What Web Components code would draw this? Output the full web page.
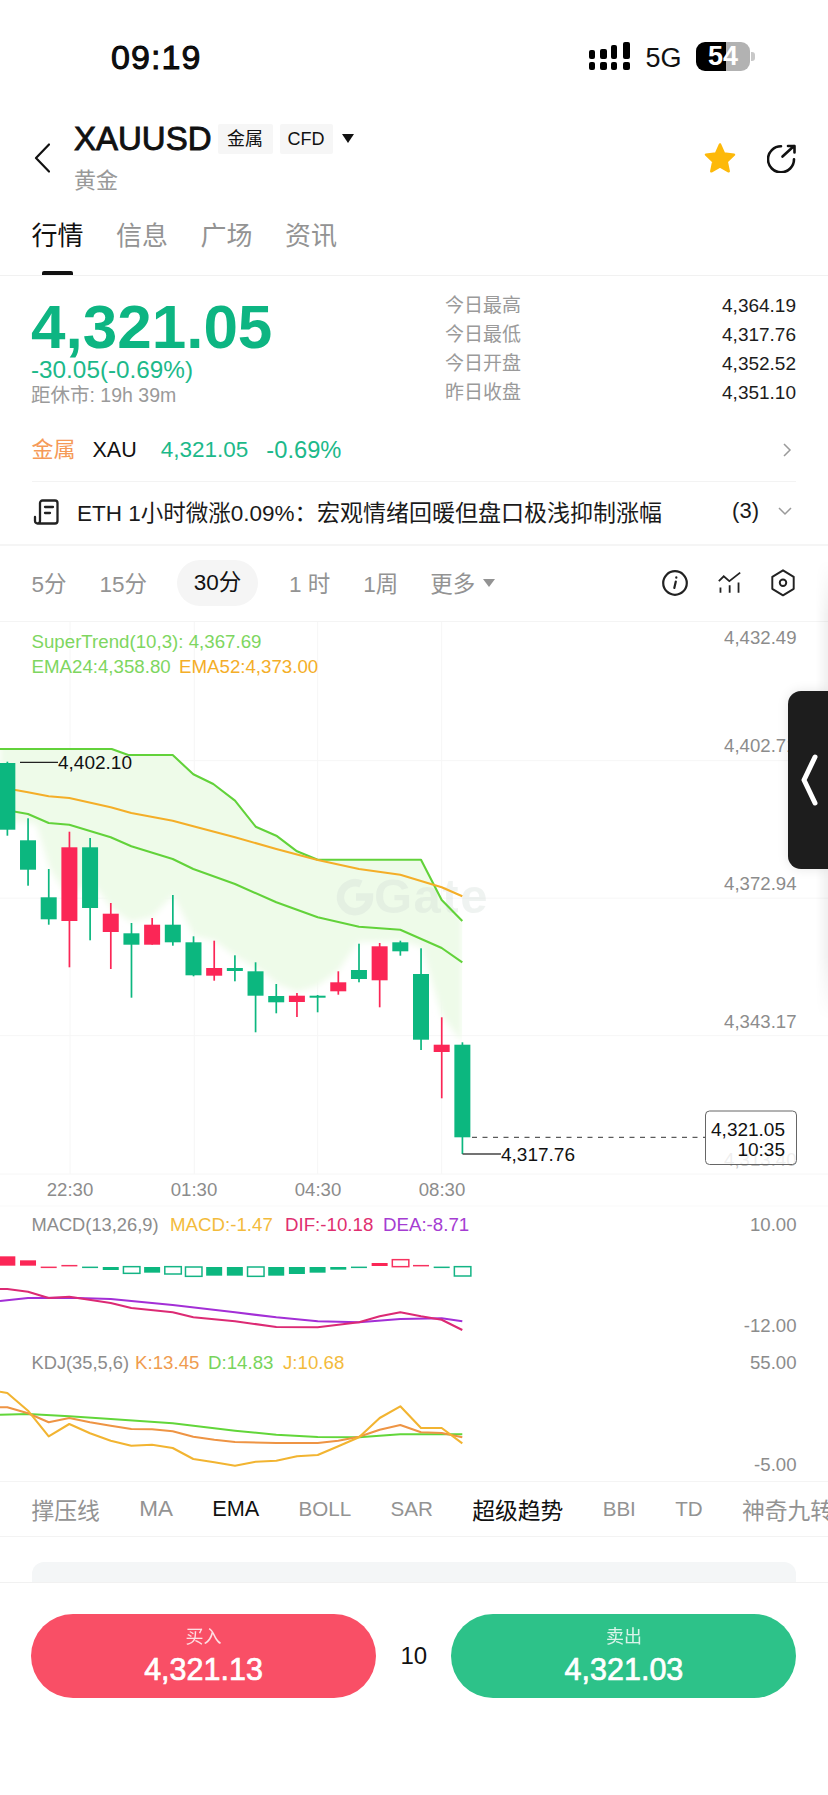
<!DOCTYPE html>
<html lang="zh"><head><meta charset="utf-8"><title>XAUUSD</title>
<style>
html,body{margin:0;padding:0;background:#fff}
body{width:828px;height:1795px;overflow:hidden;font-family:"Liberation Sans","Noto Sans CJK SC",sans-serif;color:#111;display:flex;flex-direction:column}
</style></head><body>
<status-bar></status-bar>
<market-header></market-header>
<market-tabs></market-tabs>
<price-stats></price-stats>
<metal-row></metal-row>
<news-row></news-row>
<interval-bar></interval-bar>
<kline-chart></kline-chart>
<indicator-tabs></indicator-tabs>
<card-peek></card-peek>
<trade-footer></trade-footer>
<side-handle></side-handle>
<script>
const FONT='"Liberation Sans","Noto Sans CJK SC",sans-serif';
function def(name,html){customElements.define(name,class extends HTMLElement{connectedCallback(){if(this.shadowRoot)return;this.attachShadow({mode:'open'}).innerHTML=html;}});}

def('status-bar',`<style>
:host{display:flex;flex:none;height:110px;position:relative;box-sizing:border-box;padding:38px 73px 0 111px;justify-content:space-between;align-items:flex-start}
.t{font-size:34px;line-height:38px;font-weight:400;letter-spacing:1.1px;-webkit-text-stroke:.9px #000}
.r{display:flex;align-items:center;height:38px;margin-top:-1px}
.g{font-size:27px;line-height:38px;margin:3px 14.500px 0 15px}
.b{position:relative;width:54px;height:29px;border-radius:9px;background:linear-gradient(90deg,#000 0 30px,#b2b2b2 30px);color:#fff;font-weight:700;font-size:27px;line-height:29px;text-align:center}
.n{width:4px;height:9px;background:#c8c8c8;border-radius:0 3px 3px 0;margin-left:1px}
</style><div class="t">09:19</div><div class="r">
<svg width="41" height="29" viewBox="0 0 41 29" fill="#000"><rect x="0" y="20" width="6" height="8" rx="2"/><rect x="0" y="8" width="6" height="9" rx="2"/><rect x="11" y="20" width="7" height="8" rx="2"/><rect x="11" y="7" width="7" height="10" rx="2"/><rect x="22" y="20" width="6" height="8" rx="2"/><rect x="22" y="3" width="6" height="14" rx="2"/><rect x="34" y="20" width="7" height="8" rx="2"/><rect x="34" y="0" width="7" height="17" rx="2"/></svg>
<span class="g">5G</span><div class="b">54</div><div class="n"></div></div>`);

def('market-header',`<style>
:host{display:flex;flex:none;height:100px;box-sizing:border-box;padding:14px 31px 0 34px;position:relative}
.back{margin-top:19px;width:16px;height:30px;flex:none}
.m{margin-left:24px;flex:1}
.row{display:flex;align-items:center;height:30px}
.x{font-size:33px;font-weight:400;-webkit-text-stroke:.9px #111;line-height:30px;margin-right:6px}
.tag{background:#f6f6f6;height:30px;line-height:30px;font-size:18px;padding:0 8px;margin-right:7px;border-radius:2px;box-sizing:border-box;width:55px;text-align:center}
.tag+.tag{width:53px;margin-right:9px}
.tri{width:0;height:0;border-left:6.5px solid transparent;border-right:6.5px solid transparent;border-top:9px solid #111;margin-top:-2px}
.s{color:#999;font-size:22px;line-height:22px;margin-top:16px}
.a{display:flex;align-items:center;gap:30px;height:60px;margin-top:4px}
</style>
<svg class="back" viewBox="0 0 16 30" fill="none" stroke="#111" stroke-width="2.2" stroke-linecap="round" stroke-linejoin="round"><path d="M15 1.5 2 15 15 28.5"/></svg>
<div class="m"><div class="row"><span class="x">XAUUSD</span><span class="tag">金属</span><span class="tag">CFD</span><span class="tri"></span></div><div class="s">黄金</div></div>
<div class="a">
<svg width="34" height="32" viewBox="0 0 34 32"><path d="M17 2.5 21 11.5 31 12.700 23.700 19.500 25.700 29.300 17 24.300 8.300 29.300 10.300 19.500 3 12.700 13 11.500Z" fill="#fdb90a" stroke="#fdb90a" stroke-width="2.5" stroke-linejoin="round"/></svg>
<svg width="30" height="30" viewBox="0 0 30 30" fill="none" stroke="#111" stroke-width="2.600" stroke-linecap="round" stroke-linejoin="round"><path d="M14 3.300A13 13 0 1 0 27 16.300"/><path d="M15.500 13.500 27 3M21 3h6.500v6.500"/></svg>
</div>`);

def('market-tabs',`<style>
:host{display:block;flex:none;height:66px;box-sizing:border-box;border-bottom:1px solid #f1f1f1;position:relative}
.w{display:flex;gap:32.500px;padding:9px 0 0 31.500px;font-size:26px;line-height:34px;color:#939393}
.w b{font-weight:400;color:#111}
.i{position:absolute;left:42px;bottom:0;width:31px;height:4px;background:#111;border-radius:2px 2px 0 0}
</style><div class="w"><b>行情</b><span>信息</span><span>广场</span><span>资讯</span></div><div class="i"></div>`);

def('price-stats',`<style>
:host{display:flex;flex:none;height:149px;box-sizing:border-box;padding:0 32px 0 31px;justify-content:space-between}
.p{font-size:62px;font-weight:700;color:#0db582;line-height:62px;margin-top:20px}
.c{font-size:24.300px;color:#1cb98a;line-height:26px;margin-top:-1px;white-space:nowrap}
.d{font-size:19.500px;color:#9a9a9a;line-height:24px;margin-top:0}
.st{width:351px;padding-top:14.500px}
.r{display:flex;justify-content:space-between;height:29px;line-height:29px;font-size:19px}
.r span{color:#9a9a9a}.r b{font-weight:400;color:#1c1c1c}
</style><div><div class="p">4,321.05</div><div class="c">-30.05(-0.69%)</div><div class="d">距休市: 19h 39m</div></div>
<div class="st"><div class="r"><span>今日最高</span><b>4,364.19</b></div><div class="r"><span>今日最低</span><b>4,317.76</b></div><div class="r"><span>今日开盘</span><b>4,352.52</b></div><div class="r"><span>昨日收盘</span><b>4,351.10</b></div></div>`);

def('metal-row',`<style>
:host{display:block;flex:none;height:58px;box-sizing:border-box;padding:0 32px 0 31.500px}
.w{display:flex;align-items:center;height:57px;padding-bottom:6px;box-sizing:border-box;border-bottom:1px solid #f3f3f3;font-size:22.500px;color:#1cb98a;line-height:26px}
.a{color:#f59a58;font-size:22px;margin-right:17px}.x{color:#111;font-size:21.500px;margin-right:24px}.v{margin-right:18px}.e{font-size:23.700px}
svg{margin-left:auto;margin-right:4px}
</style><div class="w"><span class="a">金属</span><span class="x">XAU</span><span class="v">4,321.05</span><span class="e">-0.69%</span><svg width="9" height="14" viewBox="0 0 9 14" fill="none" stroke="#9a9a9a" stroke-width="1.500"><path d="M1 1l6 6-6 6"/></svg></div>`);

def('news-row',`<style>
:host{display:flex;flex:none;height:63px;box-sizing:border-box;align-items:center;padding:0 36px 6px 33px;border-bottom:2px solid #f5f5f5;font-size:22.500px;color:#1a1a1a}
svg.d{margin-right:18px;flex:none;margin-top:2px}
.t{flex:1;white-space:nowrap}.t i{font-style:normal;font-size:23px}
.n{margin-right:19px;font-size:22px}
</style><svg class="d" width="26" height="26" viewBox="0 0 26 26" fill="none" stroke="#222" stroke-width="2.300" stroke-linecap="round" stroke-linejoin="round"><path d="M2 18v4a2.500 2.500 0 0 0 5 0V4a2.500 2.500 0 0 1 2.500-2.500H22A2.500 2.500 0 0 1 24.500 4v18a2.500 2.500 0 0 1-2.500 2.500H5"/><path d="M12 8h8M12 14h5"/></svg>
<span class="t">ETH 1小时微涨0.09%：<i>宏观情绪回暖但盘口极浅抑制涨幅</i></span><span class="n">(3)</span><svg width="14" height="9" viewBox="0 0 14 9" fill="none" stroke="#9a9a9a" stroke-width="1.500" style="margin-top:2px"><path d="M1 1l6 6 6-6"/></svg>`);

def('interval-bar',`<style>
:host{display:flex;flex:none;height:76px;box-sizing:border-box;align-items:center;padding:0 33px 0 31.500px;font-size:22.500px;color:#939393;border-bottom:1px solid #f4f4f4}
.i{flex:none;margin-top:-4px}.on{background:#f5f5f5;color:#111;width:81px;height:46px;line-height:46px;border-radius:23px;text-align:center;margin-top:-1px}
.tri{width:0;height:0;border-left:6px solid transparent;border-right:6px solid transparent;border-top:8px solid #939393;margin-left:8px;margin-top:-1px}
.ic{margin-left:auto;display:flex;align-items:center;gap:29px;margin-top:-2px}
</style><span class="i" style="margin-right:33px">5分</span><span class="i" style="margin-right:30px">15分</span><span class="i on" style="margin-right:31px">30分</span><span class="i" style="margin-right:33px">1 时</span><span class="i" style="margin-right:32px">1周</span><span class="i">更多</span><span class="tri"></span>
<span class="ic">
<svg width="26" height="26" viewBox="0 0 26 26" fill="none" stroke="#222" stroke-width="2.200" stroke-linecap="round"><circle cx="13" cy="13" r="11.800"/><path d="M13.800 11.500 12.300 18"/><path d="M14.300 7.300v.4"/></svg>
<svg width="25" height="23" viewBox="195 35 75 70" fill="none" stroke="#222" stroke-width="5.500"><path d="M200 66 215 51 232 66 265 40"/><path d="M205 85v16M233 78v23M260 70v31"/></svg>
<svg width="24" height="28" viewBox="358 32 74 84" fill="none" stroke="#222" stroke-width="6" stroke-linejoin="round"><path d="M395 35 428 55V92L395 112 362 92V55Z"/><circle cx="395" cy="73" r="10"/></svg>
</span>`);

class KlineChart extends HTMLElement{
 connectedCallback(){
  if(this.shadowRoot)return;
  const G='#0cb77f',R='#fb2656',LG='#62d23a',OR='#f4ae28';
  const X=i=>(22+i*62.05)/3;
  const c=[[0,764,830.7,762.7,836.7],[0,841.3,870.7,819.3,886.7],[0,898.3,920.3,870,925.7],[1,848.3,922,832.7,968.3],[0,848.3,909,839,941.3],[1,914.7,933,904,970],[0,934.3,945.7,924,998.7],[1,925.7,945.7,919,945.7],[0,925.7,943.3,896,946.7],[0,943.3,976.3,937.3,977.3],[1,969,976.7,941.7,981.7],[0,969,972,956.3,982.3],[0,972.3,996.7,963.3,1033.3],[0,997,1003.3,985,1014.3],[1,996.7,1003,994,1018],[0,996.7,998.7,996,1013.3],[1,983.3,992.3,972.3,995.7],[0,971,980,944.7,983.3],[1,947.3,981.3,944,1008.3],[0,943.3,952.3,941.7,956.7],[0,975,1040.7,949.3,1051],[1,1045.7,1053,1018.3,1099.3],[0,1045.7,1138.3,1043.3,1155]];
  const pts=(a,base)=>a.map(([x,y])=>`${(x/3).toFixed(1)},${(base+y/3).toFixed(1)}`).join(' ');
  const st=[[0,390],[335,390],[385,408],[518,408],[580,466],[640,495],[705,545],[767,623],[829,650],[891,697],[953,722],[1263,722],[1325,843],[1387,906]];
  const e52=[[0,505],[84,520],[146,532],[208,537],[332,565],[394,582],[518,605],[580,622],[705,655],[829,690],[953,723],[1077,750],[1201,767],[1325,805],[1387,832]];
  const e24=[[0,570],[84,585],[146,612],[208,617],[332,655],[394,682],[518,720],[580,750],[705,795],[829,850],[953,895],[1077,923],[1201,932],[1325,987],[1387,1030]];
  const low='462,1043 442,1017 422,948 400,942 380,943 358,943 338,972 317,987 297,993 277,985 263,973 235,957 215,942 194,937 173,896 152,918 131,923 112,910 90,880 69,900 50,870 36,825 20,823 0,823';
  const dif=[[0,270],[22,270],[84,278],[146,297],[208,293],[332,312],[394,327],[518,340],[580,355],[705,367],[829,384],[953,385],[1077,370],[1139,352],[1201,340],[1263,352],[1325,362],[1387,393]];
  const dea=[[0,306],[84,297],[208,296],[332,300],[518,318],[705,340],[829,355],[953,367],[1077,370],[1201,360],[1325,358],[1387,367]];
  const J=[[0,578],[22,582],[84,635],[146,712],[208,675],[270,703],[332,725],[394,740],[456,737],[518,747],[580,780],[643,790],[705,800],[767,788],[829,785],[891,772],[953,768],[1015,742],[1077,715],[1139,657],[1201,622],[1263,687],[1325,687],[1387,733]];
  const K=[[0,625],[22,625],[84,643],[146,670],[208,657],[270,670],[332,680],[394,690],[456,691],[518,697],[580,713],[643,722],[705,729],[829,732],[953,732],[1015,725],[1077,713],[1139,692],[1201,678],[1263,700],[1325,702],[1387,715]];
  const D=[[0,647],[84,645],[208,652],[332,660],[518,673],[705,695],[829,707],[953,714],[1077,715],[1201,706],[1387,706]];
  const macd=[['rf',172,200],['rf',184,200],['rl',205],['rl',200],['gl',205],['gf',204,213],['go',203,223],['gf',204,221],['go',203,225],['go',204,232],['gf',204,230],['gf',204,230],['go',204,232],['gf',204,230],['gf',204,225],['gf',204,221],['gf',204,212],['gl',205],['rf',192,201],['ro',182,203],['rl',200],['gl',205],['go',203,231]];
  let s='<defs><filter id="bl" x="-5%" y="-5%" width="110%" height="110%"><feGaussianBlur stdDeviation="3"/></filter><clipPath id="cp"><polygon points="'+pts(st,620)+' 462,1100 0,1100"/></clipPath></defs>';
  for(const x of [70,194.3,317.7,441.7]) s+=`<line x1="${x}" x2="${x}" y1="623" y2="1175" stroke="#f6f6f6"/>`;
  for(const y of [761.7,899.2,1036.7,1175]) s+=`<line x1="0" x2="828" y1="${y}" y2="${y}" stroke="#f6f6f6"/>`;
  s+=`<line x1="0" x2="828" y1="1207" y2="1207" stroke="#f9f9f9"/>`;
  s+=`<g clip-path="url(#cp)"><polygon points="0,640 462,640 ${low}" fill="#eefbe9" filter="url(#bl)"/></g>`;
  s+=`<g opacity=".32"><path d="M361 885A14.500 14.500 0 1 0 369.500 898H356" fill="none" stroke="#d0dbd6" stroke-width="7.500"/><text x="374" y="914" font-size="49" font-weight="700" letter-spacing="1.500" fill="#d0dbd6">Gate</text></g>`;
  const pl=(a,col,b=620,w=2.1)=>`<polyline points="${pts(a,b)}" fill="none" stroke="${col}" stroke-width="${w}" stroke-linejoin="round"/>`;
  s+=pl(st,LG)+pl(e24,LG)+pl(e52,OR);
  c.forEach((d,i)=>{const x=X(i),col=d[0]?R:G;s+=`<rect x="${x-.8}" y="${d[3]}" width="1.700" height="${d[4]-d[3]}" fill="${col}"/><rect x="${x-8}" y="${d[1]}" width="16" height="${d[2]-d[1]}" fill="${col}"/>`;});
  s+=`<line x1="20" x2="58" y1="763.3" y2="763.3" stroke="#222" stroke-width="1.200"/><line x1="462.500" x2="501" y1="1155" y2="1155" stroke="#444" stroke-width="1.500"/>`;
  s+=`<line x1="472" x2="705" y1="1138.300" y2="1138.300" stroke="#333" stroke-dasharray="5 5.500" stroke-width="1"/>`;
  const T=(x,y,t,col='#8c8c8c',a='start',fs=18.7)=>`<text x="${x}" y="${y}" fill="${col}" text-anchor="${a}" font-size="${fs}">${t}</text>`;
  s+=T(58,770,'4,402.10','#111','start',19)+T(501,1162,'4,317.76','#111','start',19);
  for(const [y,t] of [[645,'4,432.49'],[753,'4,402.71'],[891,'4,372.94'],[1029,'4,343.17']]) s+=T(796.5,y,t,'#8c8c8c','end',18.6);
  s+=`<text x="796.500" y="1167" fill="#c4c4c4" text-anchor="end" font-size="18.600">4,313.40</text>`;
  s+=`<rect x="705.500" y="1112" width="91" height="53.500" rx="4" fill="#fff" fill-opacity=".72" stroke="#666" stroke-width="1"/>`;
  s+=T(785,1137,'4,321.05','#111','end',19)+T(785,1157,'10:35','#111','end',19);
  for(const [x,t] of [[70,'22:30'],[194,'01:30'],[318,'04:30'],[442,'08:30']]) s+=T(x,1197,t,'#8c8c8c','middle',18.6);
  s+=T(31.5,649,'SuperTrend(10,3): 4,367.69','#7ed65f')+T(31.5,673.5,'EMA24:4,358.80','#7ed65f')+T(179,673.5,'EMA52:4,373.00',OR);
  s+=T(31.5,1232,'MACD(13,26,9)','#8c8c8c','start',18.3)+T(170,1232,'MACD:-1.47','#f3bb3c')+T(285,1232,'DIF:-10.18','#df2f70')+T(383,1232,'DEA:-8.71','#a53dd2');
  s+=T(31.5,1370,'KDJ(35,5,6)','#8c8c8c','start',18.3)+T(135,1370,'K:13.45','#ef9c50')+T(208,1370,'D:14.83','#78d45c')+T(283,1370,'J:10.68','#f3bb3c');
  for(const [y,t] of [[1232,'10.00'],[1333,'-12.00'],[1370,'55.00'],[1472,'-5.00']]) s+=T(796.5,y,t,'#8c8c8c','end',18.6);
  macd.forEach((m,i)=>{const x=X(i),col=m[0][0]==='r'?'#f7325f':'#14b485';const k=m[0][1];
    if(k==='l')s+=`<line x1="${x-8}" x2="${x+8}" y1="${1200+m[1]/3}" y2="${1200+m[1]/3}" stroke="${col}" stroke-width="1.500"/>`;
    else if(k==='f')s+=`<rect x="${x-8}" y="${1200+m[1]/3}" width="16" height="${(m[2]-m[1])/3}" fill="${m[0][0]==='r'?R:G}"/>`;
    else s+=`<rect x="${x-8}" y="${1200+m[1]/3}" width="16.500" height="${(m[2]-m[1])/3}" fill="none" stroke="${col}" stroke-width="1.500"/>`;});
  s+=pl(dea,'#a32fd6',1200)+pl(dif,'#dc2a74',1200);
  s+=pl(D,'#62d63a',1200)+pl(K,'#ee9444',1200)+pl(J,'#f2b431',1200);
  this.attachShadow({mode:'open'}).innerHTML=`<style>:host{display:block;flex:none;height:860px;border-bottom:1px solid #f4f4f4;box-sizing:border-box}svg{display:block;font-family:${FONT}}</style><svg width="828" height="859" viewBox="0 623 828 859">${s}</svg>`;
 }
}
customElements.define('kline-chart',KlineChart);

def('indicator-tabs',`<style>
:host{display:flex;flex:none;height:55px;box-sizing:border-box;border-bottom:1px solid #f3f3f3;align-items:center;padding-left:31.500px;gap:39.300px;font-size:22.800px;color:#939393;white-space:nowrap;overflow:hidden}
b{font-weight:400;color:#111}
.l{font-size:20.600px}
</style><span>撑压线</span><span style="font-size:22.500px">MA</span><b style="font-size:21.700px">EMA</b><span class="l">BOLL</span><span class="l">SAR</span><b>超级趋势</b><span class="l">BBI</span><span class="l">TD</span><span>神奇九转</span>`);

def('card-peek',`<style>
:host{display:block;flex:none;height:45px;box-sizing:border-box;padding:25px 32px 0}
div{height:20px;background:#f4f6f7;border-radius:12px 12px 0 0}
</style><div></div>`);

def('trade-footer',`<style>
:host{display:flex;flex:1;box-sizing:border-box;padding:31px 31.500px 0 31px;border-top:1px solid #f1f1f1;align-items:flex-start;justify-content:space-between}
.b{width:345px;height:84px;border-radius:42px;color:#fff;text-align:center;box-sizing:border-box;padding-top:12px}
.buy{background:#f94f66}.sell{background:#2dc289}
.l{font-size:18px;line-height:22px;opacity:.82}
.v{font-size:30.500px;line-height:36px;font-weight:400;-webkit-text-stroke:.7px #fff;margin-top:3px}
.q{font-size:24px;line-height:84px;color:#111}
</style><div class="b buy"><div class="l">买入</div><div class="v">4,321.13</div></div><div class="q">10</div><div class="b sell"><div class="l">卖出</div><div class="v">4,321.03</div></div>`);

def('side-handle',`<style>
:host{position:absolute;left:0;top:0;width:828px;height:0;display:block;overflow:visible}
.s{position:absolute;right:0;top:560px;width:12px;height:460px;background:linear-gradient(90deg,rgba(0,0,0,0),rgba(0,0,0,.06));-webkit-mask-image:linear-gradient(180deg,transparent,#000 12%,#000 86%,transparent)}
.h{position:absolute;right:0;top:691px;width:40px;height:178px;background:#1d1d1d;border-radius:13px 0 0 13px;box-shadow:0 0 12px rgba(0,0,0,.1)}
svg{position:absolute;left:13px;top:63px}
</style><div class="s"></div><div class="h"><svg width="18" height="52" viewBox="0 0 18 52" fill="none" stroke="#fff" stroke-width="5" stroke-linecap="round" stroke-linejoin="round"><path d="M14 3 3 26 14 49"/></svg></div>`);
</script>
</body></html>
